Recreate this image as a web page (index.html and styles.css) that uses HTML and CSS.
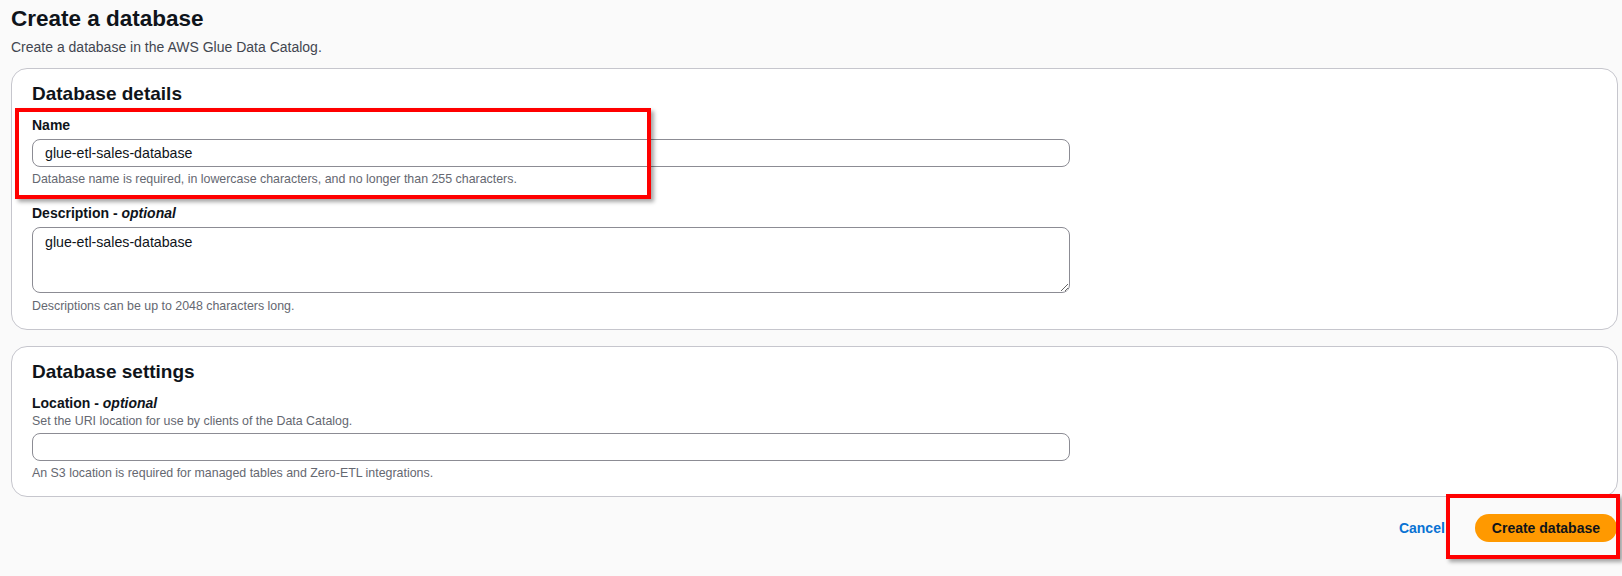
FILE: index.html
```html
<!DOCTYPE html>
<html lang="en">
<head>
<meta charset="utf-8">
<title>Create a database</title>
<link rel="stylesheet" href="styles.css">
</head>
<body>
<div class="page">
  <h1 class="title">Create a database</h1>
  <p class="subtitle">Create a database in the AWS Glue Data Catalog.</p>

  <section class="card">
    <h2 class="card-title">Database details</h2>
    <div class="field">
      <label class="label" for="name">Name</label>
      <input class="input" id="name" type="text" value="glue-etl-sales-database">
      <div class="hint">Database name is required, in lowercase characters, and no longer than 255 characters.</div>
    </div>
    <div class="field">
      <label class="label" for="desc">Description - <i>optional</i></label>
      <textarea class="input textarea" id="desc">glue-etl-sales-database</textarea>
      <div class="hint hint-after-area">Descriptions can be up to 2048 characters long.</div>
    </div>
  </section>

  <section class="card">
    <h2 class="card-title">Database settings</h2>
    <div class="field">
      <label class="label" for="loc">Location - <i>optional</i></label>
      <div class="desc">Set the URI location for use by clients of the Data Catalog.</div>
      <input class="input" id="loc" type="text" value="">
      <div class="hint">An S3 location is required for managed tables and Zero-ETL integrations.</div>
    </div>
  </section>

  <div class="actions">
    <a class="cancel" href="#">Cancel</a>
    <button class="primary" type="button">Create database</button>
  </div>

  <div class="mark mark-name"></div>
  <div class="mark mark-create"></div>
</div>
</body>
</html>
```

FILE: styles.css
```css
* {
  box-sizing: border-box;
}

html, body {
  margin: 0;
  padding: 0;
  background: #fafafa;
}

body {
  font-family: "Liberation Sans", Arial, sans-serif;
  color: #0f141a;
  width: 1622px;
  height: 576px;
  overflow: hidden;
}

.page {
  position: relative;
  padding: 5px 4px 0 11px;
}

.title {
  margin: 0;
  font-size: 22.5px;
  line-height: 28px;
  font-weight: 700;
  color: #0f141a;
}

.subtitle {
  margin: 4px 0 0 0;
  font-size: 14px;
  line-height: 20px;
  color: #424650;
}

.card {
  margin-top: 11px;
  background: #ffffff;
  border: 1px solid #c6c6cd;
  border-radius: 16px;
  padding: 13px 20px 15px 20px;
}

.card + .card {
  margin-top: 16px;
}

.card-title {
  margin: 0 0 9px 0;
  font-size: 19px;
  line-height: 24px;
  font-weight: 700;
  color: #0f141a;
}

.field {
  display: flex;
  flex-direction: column;
  align-items: flex-start;
}

.field + .field {
  margin-top: 16px;
}

.label {
  font-size: 14px;
  line-height: 20px;
  font-weight: 700;
  color: #0f141a;
}

.label i {
  font-style: italic;
  font-weight: 700;
}

.desc {
  font-size: 12.4px;
  line-height: 16px;
  color: #656871;
}

.input {
  display: block;
  margin-top: 4px;
  width: 1038px;
  height: 28px;
  padding: 0 12px;
  border: 1px solid #8c8c94;
  border-radius: 8px;
  background: #ffffff;
  font-family: "Liberation Sans", Arial, sans-serif;
  font-size: 14.2px;
  color: #0f141a;
  outline: none;
}

.textarea {
  height: 66px;
  padding: 4px 12px;
  line-height: 20px;
  resize: vertical;
}

.hint {
  margin-top: 4px;
  font-size: 12.4px;
  line-height: 16px;
  color: #656871;
}

.hint-after-area {
  margin-top: 5px;
}

.actions {
  margin-top: 17px;
  display: flex;
  justify-content: flex-end;
  align-items: center;
  gap: 30px;
  padding-right: 1px;
}

.cancel {
  font-size: 14px;
  line-height: 20px;
  font-weight: 700;
  color: #0972d3;
  text-decoration: none;
}

.primary {
  height: 28px;
  padding: 0 17px;
  border: none;
  border-radius: 14px;
  background: #ff9900;
  font-family: "Liberation Sans", Arial, sans-serif;
  font-size: 14px;
  font-weight: 700;
  color: #0f141a;
  cursor: pointer;
}

.mark {
  position: absolute;
  border: 4px solid #ff0000;
  box-shadow: 3px 3px 4px rgba(0, 0, 0, 0.35);
  pointer-events: none;
}

.mark-name {
  left: 15px;
  top: 108px;
  width: 636px;
  height: 91px;
}

.mark-create {
  left: 1446px;
  top: 494px;
  width: 174px;
  height: 65px;
}
```
